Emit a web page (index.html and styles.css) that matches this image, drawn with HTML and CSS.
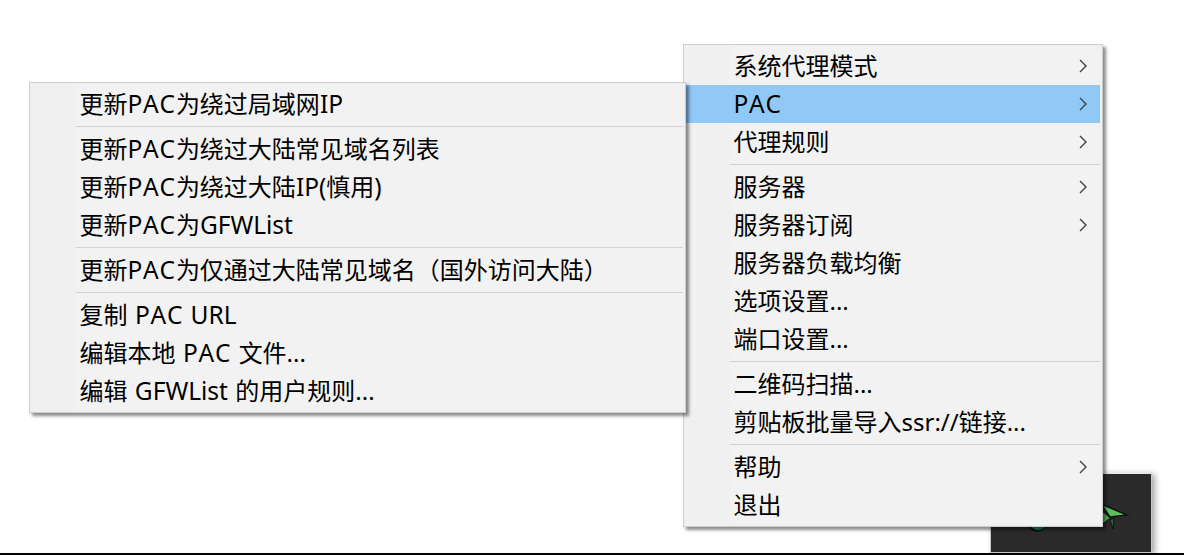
FILE: index.html
```html
<!DOCTYPE html>
<html lang="zh-CN">
<head>
  <meta charset="UTF-8" />
  <title>ShadowsocksR 托盘菜单</title>
  <link rel="stylesheet" href="styles.css">
</head>
<body>

  <!-- Tray popup behind the menus -->
  <div class="tray">
    <svg class="tray-icon" width="160" height="81" viewBox="0 0 160 81">
      <circle cx="46" cy="48" r="10" fill="#111"/>
      <circle cx="47" cy="47" r="9" fill="#1c8a4c"/>
      <polygon points="110,30 136,41 119,43" fill="#5ac05c" stroke="#111" stroke-width="1.5"/>
      <polygon points="110,36 119,44 113,49 110,49" fill="#4fb552" stroke="#111" stroke-width="1"/>
      <polygon points="119,46 123,44 122,55" fill="#1f6b3a" stroke="#111" stroke-width="1"/>
    </svg>
  </div>

  <!-- Main menu -->
  <div class="menu menu-main">
    <ul class="menu-list">
      <li class="item"><span>系统代理模式</span><svg class="arrow" viewBox="0 0 8 14"><path d="M1 1l6 6-6 6"/></svg></li>
      <li class="item active"><span class="lat pac">PAC</span><svg class="arrow" viewBox="0 0 8 14"><path d="M1 1l6 6-6 6"/></svg></li>
      <li class="item"><span>代理规则</span><svg class="arrow" viewBox="0 0 8 14"><path d="M1 1l6 6-6 6"/></svg></li>
      <li class="sep"></li>
      <li class="item"><span>服务器</span><svg class="arrow" viewBox="0 0 8 14"><path d="M1 1l6 6-6 6"/></svg></li>
      <li class="item"><span>服务器订阅</span><svg class="arrow" viewBox="0 0 8 14"><path d="M1 1l6 6-6 6"/></svg></li>
      <li class="item"><span>服务器负载均衡</span></li>
      <li class="item"><span>选项设置...</span></li>
      <li class="item"><span>端口设置...</span></li>
      <li class="sep"></li>
      <li class="item"><span>二维码扫描...</span></li>
      <li class="item"><span>剪贴板批量导入ssr://链接...</span></li>
      <li class="sep"></li>
      <li class="item"><span>帮助</span><svg class="arrow" viewBox="0 0 8 14"><path d="M1 1l6 6-6 6"/></svg></li>
      <li class="item"><span>退出</span></li>
    </ul>
  </div>

  <!-- PAC submenu -->
  <div class="menu menu-pac">
    <ul class="menu-list">
      <li class="item"><span>更新<span class="lat pac">PAC</span>为绕过局域网<span class="lat">IP</span></span></li>
      <li class="sep"></li>
      <li class="item"><span>更新<span class="lat pac">PAC</span>为绕过大陆常见域名列表</span></li>
      <li class="item"><span>更新<span class="lat pac">PAC</span>为绕过大陆<span class="lat">IP(</span>慎用<span class="lat">)</span></span></li>
      <li class="item"><span>更新<span class="lat pac">PAC</span>为<span class="lat">GFWList</span></span></li>
      <li class="sep"></li>
      <li class="item"><span>更新<span class="lat pac">PAC</span>为仅通过大陆常见域名（国外访问大陆）</span></li>
      <li class="sep"></li>
      <li class="item"><span>复制<span class="lat"> </span><span class="lat pac">PAC</span><span class="lat"> URL</span></span></li>
      <li class="item"><span>编辑本地<span class="lat"> </span><span class="lat pac">PAC</span><span class="lat"> </span>文件...</span></li>
      <li class="item"><span>编辑<span class="lat"> GFWList </span>的用户规则...</span></li>
    </ul>
  </div>

  <div class="taskbar-line"></div>

</body>
</html>
```

FILE: styles.css
```css
html, body {
  height: 100%;
}

body {
  margin: 0;
  background-color: #fff;
  color: #000;
  font-family: "Noto Sans", "Noto Sans CJK SC", sans-serif;
  font-size: 24px;
  font-kerning: none;
  overflow: hidden;
  position: relative;
}

/* Latin runs sit a little larger than the CJK text in the original font */
.lat {
  font-size: 24.5px;
  word-spacing: 1px;
}

.pac {
  letter-spacing: 0.8px;
}

/* Menus float over the desktop, so they are placed by coordinates */
.menu {
  position: absolute;
  box-sizing: border-box;
  padding: 2px;
  background-color: #f0f0f0;
  border: 1px solid #cdcdcd;
  box-shadow: 3px 3px 3px rgba(0, 0, 0, 0.45);
}

.menu-main {
  left: 683px;
  top: 44px;
  width: 420px;
  height: 483px;
  z-index: 2;
}

.menu-pac {
  left: 29px;
  top: 82px;
  width: 657px;
  height: 331px;
  z-index: 3;
}

.menu-list {
  list-style: none;
  margin: 0;
  padding: 0;
  background: linear-gradient(to right, #f0f0f0 44px, #f2f2f2 44px);
}

.item {
  display: flex;
  align-items: center;
  justify-content: space-between;
  height: 38px;
  line-height: 38px;
  padding: 0 13px 0 47.5px;
  white-space: pre;
}

.item.active {
  background-color: #90c8f6;
}

.sep {
  height: 1px;
  margin: 3px 0 3px 44px;
  background-color: #d2d2d2;
}

.arrow {
  width: 8px;
  height: 14px;
  flex: none;
}

.arrow path {
  fill: none;
  stroke: #404040;
  stroke-width: 1.4;
}

/* Dark tray window peeking out under the main menu */
.tray {
  position: absolute;
  left: 990px;
  top: 472px;
  width: 162px;
  height: 81px;
  box-sizing: border-box;
  background-color: #2a2a2a;
  border: 1px solid #c8c8c8;
  border-top: 2px solid #e8e8e8;
  box-shadow: 3px 2px 6px rgba(0, 0, 0, 0.35);
  z-index: 1;
}

.tray-icon {
  display: block;
}

.taskbar-line {
  position: absolute;
  left: 0;
  right: 0;
  bottom: 0;
  height: 2px;
  background-color: #000;
  z-index: 1;
}
```
